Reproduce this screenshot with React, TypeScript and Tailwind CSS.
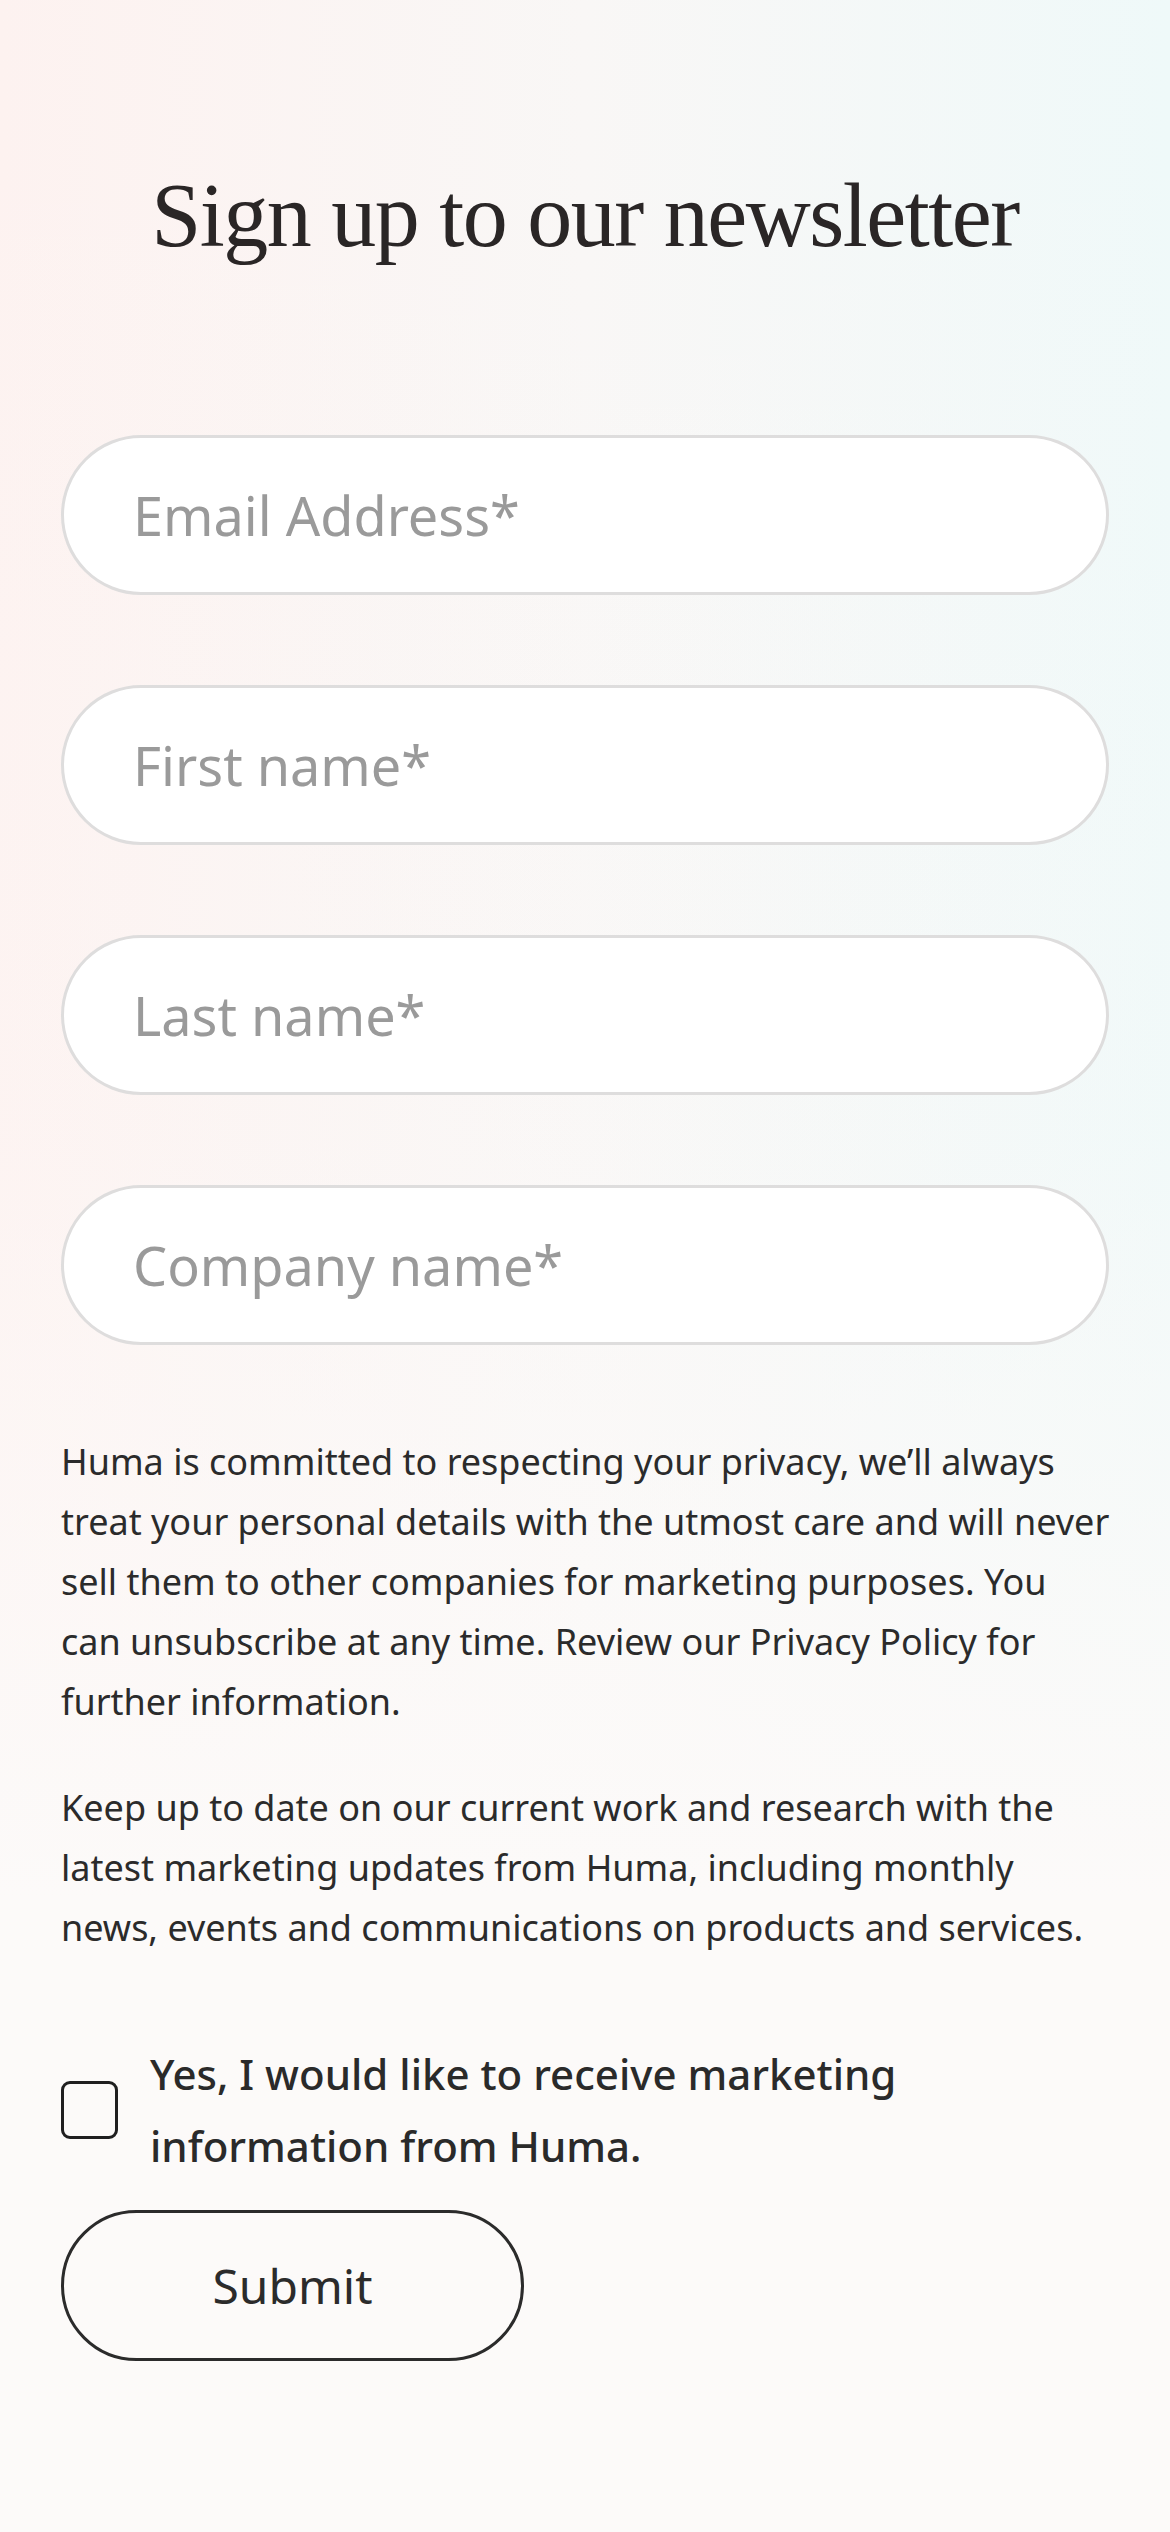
import React from "react";

const fields = ["Email Address*", "First name*", "Last name*", "Company name*"];

const App = () => {
  return (
    <div className="min-h-screen w-full bg-[linear-gradient(180deg,rgba(252,250,249,0)_0%,rgba(252,250,249,0.2)_45%,#fcfaf9_75%),linear-gradient(90deg,#fdf2f0_0%,#f9f7f6_50%,#eff9f9_100%)] font-['Noto_Sans',sans-serif] text-[#262626]">
      <div className="px-[61px] pt-[171px] pb-[170px]">
        <h1 className="text-center font-['Liberation_Serif',serif] text-[90px] leading-[90px] tracking-[-1.5px] text-[#2a2626]">
          Sign up to our newsletter
        </h1>

        <form className="mt-[174px] flex flex-col">
          <div className="flex flex-col gap-[90px]">
            {fields.map((f) => (
              <input
                key={f}
                type="text"
                placeholder={f}
                className="h-[160px] w-full rounded-full border-[3px] border-[#dedddd] bg-white pl-[69px] text-[54px] text-[#262626] outline-none placeholder:text-[#9a9a9a]"
              />
            ))}
          </div>

          <p className="mt-[87px] -mr-[3px] text-[36px] leading-[60px] text-[#2b2b2b]">
            Huma is committed to respecting your privacy, we’ll always treat
            your personal details with the utmost care and will never sell them
            to other companies for marketing purposes. You can unsubscribe at
            any time. Review our Privacy Policy for further information.
          </p>
          <p className="mt-[46px] text-[36px] leading-[60px] text-[#2b2b2b]">
            Keep up to date on our current work and research with the latest
            marketing updates from Huma, including monthly news, events and
            communications on products and services.
          </p>

          <label className="mt-[80px] flex items-center gap-[32px]">
            <span className="h-[58px] w-[57px] shrink-0 rounded-[9px] border-[3px] border-[#1f1f1f]" />
            <span className="pr-[180px] text-[42px] leading-[72px] font-medium text-[#2a2a2a]">
              Yes, I would like to receive marketing information from Huma.
            </span>
          </label>

          <button
            type="button"
            className="mt-[28px] h-[151px] w-[463px] rounded-full border-[3px] border-[#2b2b2b] text-[48px] text-[#2b2b2b]"
          >
            Submit
          </button>
        </form>
      </div>
    </div>
  );
};

export default App;
